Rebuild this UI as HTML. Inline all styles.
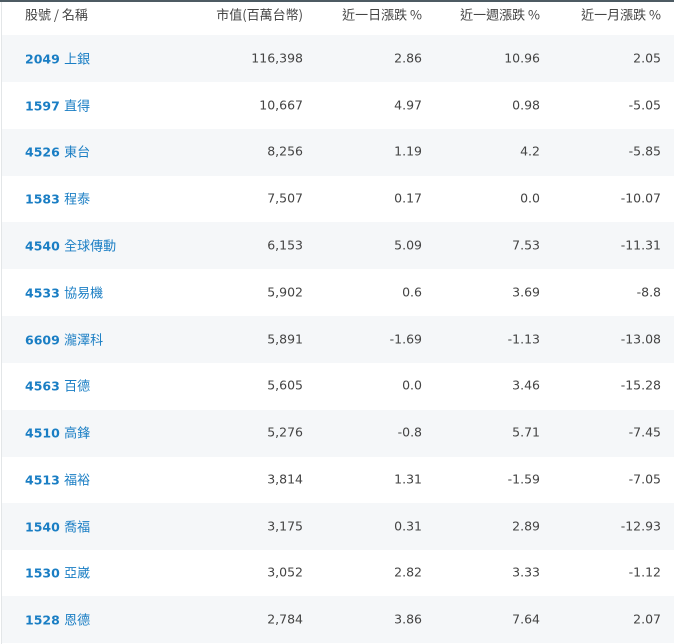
<!DOCTYPE html>
<html><head><meta charset="utf-8"><style>
body{margin:0;width:674px;height:644px;overflow:hidden;background:#fff;font-family:"DejaVu Sans","Noto Sans CJK TC",sans-serif;font-size:12.5px;color:#444;position:relative}
.top{position:absolute;left:0;top:0;width:674px;height:2px;background:#4d5b63}
.lb{position:absolute;left:1px;top:2px;width:1px;height:642px;background:#e3e6e8}
.r{position:absolute;left:2px;width:672px;height:47px}
.s{background:#f5f7f9}
.c{position:absolute;top:50%;margin-top:-1px;transform:translateY(-50%);white-space:nowrap}
.n{left:23px;color:#1a7ec4;font-weight:bold}
.n span{font-weight:normal;font-family:"Noto Sans CJK TC",sans-serif;font-size:13px}
.a{right:371px;text-align:right}.b{right:252px}.d{right:134px}.e{right:13px}
.h{color:#444;font-family:"Noto Sans CJK TC",sans-serif;font-size:13px}
</style></head><body>
<div class="top"></div><div class="lb"></div>
<div class="r" style="top:0;height:30px"><div class="c h" style="left:23px">股號 / 名稱</div><div class="c a h">市值(百萬台幣)</div><div class="c b h">近一日漲跌 %</div><div class="c d h">近一週漲跌 %</div><div class="c e h">近一月漲跌 %</div></div>
<div class="r s" style="top:35px"><div class="c n">2049 <span>上銀</span></div><div class="c a">116,398</div><div class="c b">2.86</div><div class="c d">10.96</div><div class="c e">2.05</div></div>
<div class="r" style="top:82px"><div class="c n">1597 <span>直得</span></div><div class="c a">10,667</div><div class="c b">4.97</div><div class="c d">0.98</div><div class="c e">-5.05</div></div>
<div class="r s" style="top:128.5px"><div class="c n">4526 <span>東台</span></div><div class="c a">8,256</div><div class="c b">1.19</div><div class="c d">4.2</div><div class="c e">-5.85</div></div>
<div class="r" style="top:175.5px"><div class="c n">1583 <span>程泰</span></div><div class="c a">7,507</div><div class="c b">0.17</div><div class="c d">0.0</div><div class="c e">-10.07</div></div>
<div class="r s" style="top:222px"><div class="c n">4540 <span>全球傳動</span></div><div class="c a">6,153</div><div class="c b">5.09</div><div class="c d">7.53</div><div class="c e">-11.31</div></div>
<div class="r" style="top:269px"><div class="c n">4533 <span>協易機</span></div><div class="c a">5,902</div><div class="c b">0.6</div><div class="c d">3.69</div><div class="c e">-8.8</div></div>
<div class="r s" style="top:316px"><div class="c n">6609 <span>瀧澤科</span></div><div class="c a">5,891</div><div class="c b">-1.69</div><div class="c d">-1.13</div><div class="c e">-13.08</div></div>
<div class="r" style="top:362.5px"><div class="c n">4563 <span>百德</span></div><div class="c a">5,605</div><div class="c b">0.0</div><div class="c d">3.46</div><div class="c e">-15.28</div></div>
<div class="r s" style="top:409.5px"><div class="c n">4510 <span>高鋒</span></div><div class="c a">5,276</div><div class="c b">-0.8</div><div class="c d">5.71</div><div class="c e">-7.45</div></div>
<div class="r" style="top:456px"><div class="c n">4513 <span>福裕</span></div><div class="c a">3,814</div><div class="c b">1.31</div><div class="c d">-1.59</div><div class="c e">-7.05</div></div>
<div class="r s" style="top:503px"><div class="c n">1540 <span>喬福</span></div><div class="c a">3,175</div><div class="c b">0.31</div><div class="c d">2.89</div><div class="c e">-12.93</div></div>
<div class="r" style="top:549.5px"><div class="c n">1530 <span>亞崴</span></div><div class="c a">3,052</div><div class="c b">2.82</div><div class="c d">3.33</div><div class="c e">-1.12</div></div>
<div class="r s" style="top:596px"><div class="c n">1528 <span>恩德</span></div><div class="c a">2,784</div><div class="c b">3.86</div><div class="c d">7.64</div><div class="c e">2.07</div></div>
</body></html>
